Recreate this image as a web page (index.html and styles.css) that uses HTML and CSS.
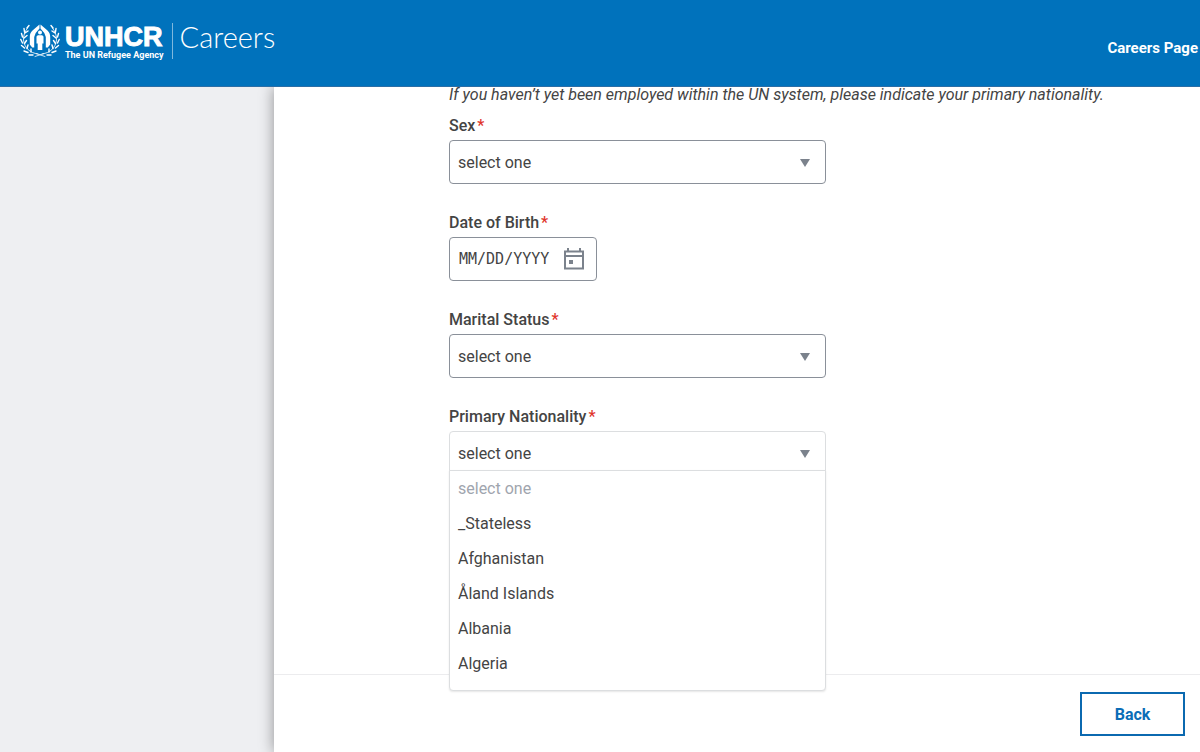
FILE: index.html
```html
<!DOCTYPE html>
<html lang="en">
  <head>
    <meta charset="utf-8">
    <meta name="viewport" content="width=device-width, initial-scale=1">
    <title>UNHCR Careers</title>
    <link rel="stylesheet" href="styles.css">
  </head>
  <body>
    <header class="topbar">
      <a class="brand" href="#">
        <svg class="emblem" viewBox="0 0 40 36" aria-hidden="true">
          <g fill="none" stroke="#fff" stroke-linecap="round">
            <path stroke-width=".8" d="M18 31C10 30 4.500 25 3.500 17c-.2-4 1-8 4-12M22 31C30 30 35.500 25 36.500 17c.2-4-1-8-4-12M15 33.500l9-3M25 33.500l-9-3"/>
            <path stroke-width="1.400" d="M7 5l2-2.500M4.500 9L4 5.500M5 10l3-2M2.500 14l-1-3.500M4 15l3-2.500M2.500 20L.8 16.500M4.500 20.500l2-3M4.500 25l-3-2.500M7 25.500l1-3.500M8 29.500l-4-1.500M11 29l0-3M13 32l-4 0"/>
            <path stroke-width="1.400" d="M33 5l-2-2.500M35.500 9l.5-3.500M35 10l-3-2M37.500 14l1-3.500M36 15l-3-2.500M37.500 20l1.700-3.500M35.500 20.500l-2-3M35.500 25l3-2.500M33 25.500l-1-3.500M32 29.500l4-1.500M29 29l0-3M27 32l4 0"/>
          </g>
          <path fill="#fff" d="M19.500 1.500L12.500 7.500C10.500 9.500 9.800 11.500 9.800 14v7.500l2.400 3h2V14l1.500-4 3.800-4.500zM20.500 1.500l7 6c2 2 2.700 4 2.700 6.500v7.500l-2.400 3h-2V14l-1.500-4-3.800-4.500z"/>
          <circle cx="20" cy="9.500" r="2" fill="#fff"/>
          <path fill="#fff" d="M17.800 12.200h4.400l1.300 1.300v7h-1.200V27h-4.600v-6.500h-1.200v-7z"/>
        </svg>
        <span class="brand-name">
          <strong>UNHCR</strong>
          <small>The UN Refugee Agency</small>
        </span>
        <span class="brand-section">Careers</span>
      </a>
      <a class="careers-link" href="#">Careers Page</a>
    </header>

    <div class="layout">
      <aside class="sidebar"></aside>
      <main class="content">
        <form class="fields">
          <p class="note">If you haven’t yet been employed within the UN system, please indicate your primary nationality.</p>

          <div class="field">
            <label for="sex">Sex<span class="req">*</span></label>
            <div class="select-wrap">
              <select id="sex"><option>select one</option></select>
            </div>
          </div>

          <div class="field">
            <label for="birth">Date of Birth<span class="req">*</span></label>
            <div class="date-wrap">
              <input id="birth" type="text" placeholder="MM/DD/YYYY">
              <button class="calendar" type="button" aria-label="Open calendar">
                <svg viewBox="0 0 22 22" width="22" height="22">
                  <path d="M2 3.500h18v17H2zM2 8h18M5 0v3M17 0v3" fill="none" stroke="#7b828c" stroke-width="2"/>
                  <path d="M6 12h4v4H6z" fill="#7b828c"/>
                </svg>
              </button>
            </div>
          </div>

          <div class="field">
            <label for="marital">Marital Status<span class="req">*</span></label>
            <div class="select-wrap">
              <select id="marital"><option>select one</option></select>
            </div>
          </div>

          <div class="field">
            <label for="nationality">Primary Nationality<span class="req">*</span></label>
            <div class="select-wrap open">
              <select id="nationality"><option>select one</option></select>
              <ul class="menu" role="listbox" aria-label="Primary Nationality">
                <li class="placeholder" role="option">select one</li>
                <li role="option">_Stateless</li>
                <li role="option">Afghanistan</li>
                <li role="option">Åland Islands</li>
                <li role="option">Albania</li>
                <li role="option">Algeria</li>
              </ul>
            </div>
          </div>
        </form>

        <footer class="actions">
          <button class="back" type="button">Back</button>
        </footer>
      </main>
    </div>
  </body>
</html>
```

FILE: styles.css
```css
* {
  box-sizing: border-box;
  margin: 0;
  padding: 0;
}

body {
  display: flex;
  flex-direction: column;
  min-height: 100vh;
  font-family: Roboto, "Liberation Sans", sans-serif;
  font-size: 16px;
  color: #444;
  background: #fff;
}

.topbar {
  display: flex;
  justify-content: space-between;
  height: 87px;
  padding: 20px 2px 0 20px;
  background: #0072bc;
  border-bottom: 1px solid #2b6ea6;
}

.topbar a {
  color: #fff;
  text-decoration: none;
}

.brand {
  display: flex;
  align-items: flex-start;
}

.emblem {
  width: 40px;
  height: 36px;
  margin-top: 3px;
}

.brand-name {
  display: flex;
  flex-direction: column;
  margin: 4px 8px 0 5px;
  font-weight: bold;
}

.brand-name strong {
  font-family: "Liberation Sans", Arial, sans-serif;
  font-size: 27px;
  line-height: 27px;
  -webkit-text-stroke: 1px #fff;
}

.brand-name small {
  font-size: 9px;
  line-height: 8px;
}

.brand-section {
  height: 36px;
  margin-top: 3px;
  padding-left: 7px;
  border-left: 1px solid #7fb8dd;
  font-family: Lato, sans-serif;
  font-size: 29px;
  font-weight: 300;
  line-height: 28px;
}

.careers-link {
  padding-top: 18px;
  font-size: 15px;
  font-weight: 700;
  line-height: 20px;
}

.layout {
  display: flex;
  flex: 1;
}

.sidebar {
  flex: 0 0 274px;
  background: #eeeff2;
}

.content {
  display: flex;
  flex: 1;
  flex-direction: column;
  background: #fff;
  box-shadow: 0 0 14px rgba(0, 0, 0, 0.4);
  clip-path: inset(0 0 0 -30px);
}

.fields {
  flex: 1;
  padding-left: 175px;
}

.note {
  margin-bottom: 13px;
  font-style: italic;
  line-height: 16px;
}

.field {
  margin-bottom: 28px;
}

.field label {
  display: block;
  margin-bottom: 4px;
  font-weight: 500;
  line-height: 20px;
}

.field + .field {
  margin-top: 29px;
}

.req {
  margin-left: 2px;
  color: #e0352b;
}

.select-wrap {
  position: relative;
  width: 377px;
}

.select-wrap::after {
  content: "";
  position: absolute;
  top: 19px;
  right: 16px;
  border: 5px solid transparent;
  border-top: 8px solid #7b828c;
  border-bottom: 0;
}

select {
  appearance: none;
  display: block;
  width: 100%;
  height: 44px;
  padding: 0 8px;
  font: inherit;
  color: #444;
  background: #fff;
  border: 1px solid #8a9099;
  border-radius: 4px;
}

.open select {
  border-color: #dcdee0;
  border-radius: 4px 4px 0 0;
}

.menu {
  position: absolute;
  top: 39px;
  left: 0;
  z-index: 1;
  width: 100%;
  height: 221px;
  overflow: hidden;
  list-style: none;
  background: #fff;
  border: 1px solid #dcdee0;
  border-radius: 0 0 4px 4px;
  box-shadow: 0 1px 2px rgba(0, 0, 0, 0.1);
}

.menu li {
  padding: 0 8px;
  line-height: 35px;
}

.menu .placeholder {
  color: #9fa5ae;
}

.date-wrap {
  display: flex;
  align-items: center;
  width: 148px;
  height: 44px;
  padding: 0 11px 0 9px;
  border: 1px solid #8a9099;
  border-radius: 4px;
}

.date-wrap input {
  flex: 1;
  min-width: 0;
  border: 0;
  outline: 0;
  font: 15px/20px "DejaVu Sans Mono", monospace;
  color: #444;
}

.date-wrap input::placeholder {
  color: #444;
}

.calendar {
  display: flex;
  border: 0;
  background: none;
}

.actions {
  display: flex;
  justify-content: flex-end;
  padding: 17px 15px 16px;
  border-top: 1px solid #ececee;
}

.back {
  width: 105px;
  height: 44px;
  font: 700 16px Roboto, sans-serif;
  color: #0b6db7;
  background: #fff;
  border: 2px solid #0b69b0;
}
```
